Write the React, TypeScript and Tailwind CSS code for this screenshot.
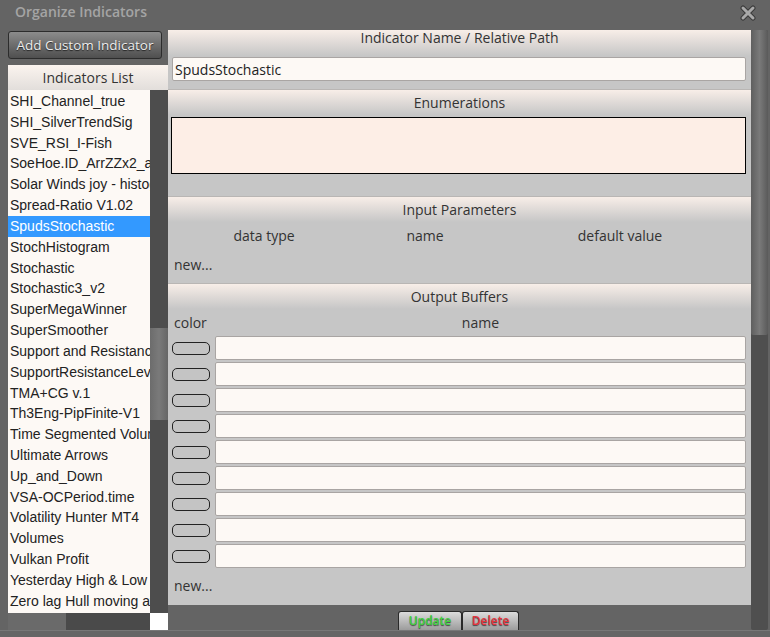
import React from 'react';

const indicators = [
  'SHI_Channel_true',
  'SHI_SilverTrendSig',
  'SVE_RSI_I-Fish',
  'SoeHoe.ID_ArrZZx2_alert',
  'Solar Winds joy - histogram',
  'Spread-Ratio V1.02',
  'SpudsStochastic',
  'StochHistogram',
  'Stochastic',
  'Stochastic3_v2',
  'SuperMegaWinner',
  'SuperSmoother',
  'Support and Resistance',
  'SupportResistanceLevels',
  'TMA+CG v.1',
  'Th3Eng-PipFinite-V1',
  'Time Segmented Volume',
  'Ultimate Arrows',
  'Up_and_Down',
  'VSA-OCPeriod.time',
  'Volatility Hunter MT4',
  'Volumes',
  'Vulkan Profit',
  'Yesterday High & Low',
  'Zero lag Hull moving average',
];

const SectionHeader = ({ title }: { title: string }) => (
  <div className="h-[26px] border-t border-[#b9b6b4] bg-gradient-to-b from-[#f8eee8] to-[#c6c6c6] text-center text-[14px] leading-[25px] text-[#333]">
    {title}
  </div>
);

const CloseIcon = () => (
  <svg width="16" height="16" viewBox="0 0 16 16">
    <path d="M3 3 L13 13 M13 3 L3 13" stroke="#3a3a3a" strokeWidth="5" strokeLinecap="round" />
    <path d="M3 3 L13 13 M13 3 L3 13" stroke="#a9a9a9" strokeWidth="3" strokeLinecap="round" />
  </svg>
);

export default function App() {
  const selected = 'SpudsStochastic';

  return (
    <div
      className="flex h-[637px] w-[770px] flex-col overflow-hidden bg-[#646464]"
      style={{ fontFamily: '"Open Sans", "Noto Sans", sans-serif' }}
    >
      {/* title bar */}
      <div className="flex h-[30px] items-start justify-between pl-[15px] pr-[14px] pt-[2px]">
        <span className="text-[14px] font-semibold leading-[20px] text-[#a4a4a4]">Organize Indicators</span>
        <div className="pt-[3px]">
          <CloseIcon />
        </div>
      </div>

      <div className="flex h-[600px]">
        {/* left column */}
        <div className="flex w-[168px] flex-col pl-[8px]">
          <button className="mt-px h-[28px] w-[154px] rounded-[3px] border border-[#2c2c2c] bg-gradient-to-b from-[#8c8c8c] to-[#4f4f4f] text-[13.5px] text-[#ececec] [text-shadow:0_1px_1px_#222]">
            Add Custom Indicator
          </button>
          <div className="mt-[6px] h-[25px] bg-gradient-to-b from-[#fbf4ef] to-[#e2dedb] text-center text-[14px] leading-[25px] text-[#333]">
            Indicators List
          </div>
          <div className="flex h-[523px]">
            <div
              className="w-[142px] overflow-hidden bg-[#fdf9f5] pt-px text-[14px] text-[#222]"
              style={{ fontFamily: '"Liberation Sans", Arial, sans-serif' }}
            >
              {indicators.map((name) => (
                <div
                  key={name}
                  className={`flex h-[20.83px] items-center whitespace-nowrap pl-[2px] ${
                    name === selected ? 'bg-[#3399ff] text-white' : ''
                  }`}
                >
                  {name}
                </div>
              ))}
            </div>
            <div className="flex w-[18px] flex-col bg-[#4d4d4d]">
              <div className="h-[238px]" />
              <div className="h-[92px] bg-gradient-to-r from-[#6c6c6c] via-[#7a7a7a] to-[#666]" />
            </div>
          </div>
          <div className="flex h-[17px]">
            <div className="flex w-[142px] bg-[#4a4a4a]">
              <div className="w-[58px] bg-[#6a6a6a]" />
            </div>
            <div className="w-[18px] bg-white" />
          </div>
        </div>

        {/* right panel */}
        <div className="flex w-[583px] flex-col">
          <div className="flex h-[575px] flex-col bg-[#c6c6c6]">
            <div className="h-[26px] bg-gradient-to-b from-[#f8eee8] to-[#c6c6c6] text-center text-[14px] leading-[15px] text-[#333]">
              Indicator Name / Relative Path
            </div>
            <div className="ml-[4px] mr-[5px] mt-px flex h-[24px] items-center rounded-[2px] border border-[#a9a5a3] bg-[#fdf9f5] px-[2px] text-[14px] text-[#222]">
              SpudsStochastic
            </div>
            <div className="mt-[8px]">
              <SectionHeader title="Enumerations" />
            </div>
            <div className="ml-[3px] mr-[5px] mt-[2px] h-[57px] border border-black bg-[#fdeee6]" />
            <div className="mt-[22px]">
              <SectionHeader title="Input Parameters" />
            </div>
            <div className="flex h-[27px] items-center text-[14px] text-[#333]">
              <span className="ml-[32px] w-[128px] text-center">data type</span>
              <span className="ml-[33px] w-[128px] text-center">name</span>
              <span className="ml-[67px] w-[128px] text-center">default value</span>
            </div>
            <div className="h-[34px] pl-[6px] pt-[6px] text-[14px] leading-[20px] text-[#333]">new...</div>
            <SectionHeader title="Output Buffers" />
            <div className="flex h-[27px] items-center text-[14px] text-[#333]">
              <span className="pl-[6px]">color</span>
              <span className="ml-[255px]">name</span>
            </div>
            <div className="flex flex-col gap-[2px]">
              {Array.from({ length: 9 }).map((_, i) => (
                <div key={i} className="flex h-[24px] items-center">
                  <div className="ml-[4px] h-[13px] w-[38px] rounded-[5px] border-[1.5px] border-[#222] bg-[#c4c4c4]" />
                  <div className="ml-[5px] mr-[5px] h-[24px] flex-1 rounded-[2px] border border-[#a9a5a3] bg-[#fdf9f5]" />
                </div>
              ))}
            </div>
            <div className="pl-[6px] pt-[8px] text-[14px] leading-[20px] text-[#333]">new...</div>
          </div>
          <div className="flex h-[25px] items-end pl-[230px]">
            <button className="h-[19px] w-[64px] rounded-t-[3px] border border-b-0 border-[#2a2a2a] bg-gradient-to-b from-[#dcdcdc] to-[#9c9c9c] text-[12px] font-semibold text-[#3fd33f] [text-shadow:0_1px_1px_#444]">
              Update
            </button>
            <button className="h-[19px] w-[57px] rounded-t-[3px] border border-b-0 border-[#2a2a2a] bg-gradient-to-b from-[#dcdcdc] to-[#9c9c9c] text-[12px] font-semibold text-[#e8323c] [text-shadow:0_1px_1px_#444]">
              Delete
            </button>
          </div>
        </div>

        {/* right scrollbar */}
        <div className="flex w-[17px] flex-col rounded-[2px] bg-[#4f4f4f]">
          <div className="h-[305px] rounded-[2px] bg-gradient-to-r from-[#5f5f5f] via-[#7a7a7a] to-[#5a5a5a]" />
        </div>
      </div>
      <div className="flex-1 border-t border-[#777] bg-[#656565]" />
    </div>
  );
}
